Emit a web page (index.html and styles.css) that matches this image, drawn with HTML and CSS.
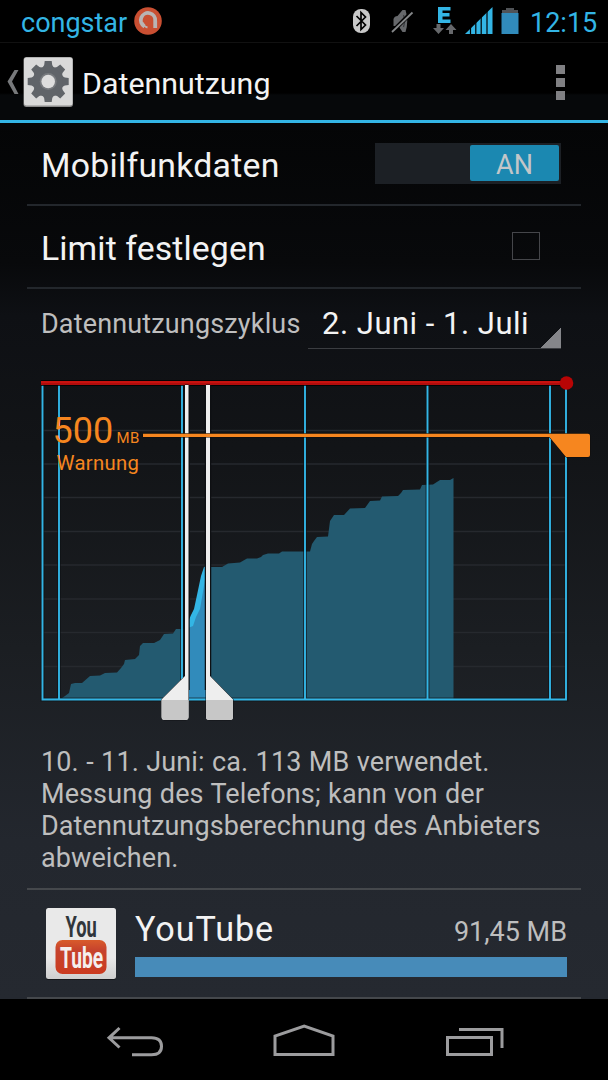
FILE: index.html
```html
<!DOCTYPE html>
<html lang="de">
<head>
  <meta charset="UTF-8" />
  <meta name="viewport" content="width=device-width, initial-scale=1.0"/>
  <title>Datennutzung</title>
  <link rel="stylesheet" href="styles.css">
</head>
<body>
  <div class="status-bar">
    <span class="carrier">congstar</span>
    <svg class="avast" width="28" height="28" viewBox="0 0 28 28">
      <circle cx="14" cy="14" r="13.8" fill="#c94f32"/>
      <path d="M10.500 19.500A7.200 7.200 0 1 1 21.200 14V21" fill="none" stroke="#b9b4b4" stroke-width="3.800"/>
      <path d="M13.500 20.500q-4-1-4.500-5" fill="none" stroke="#b9b4b4" stroke-width="2"/>
    </svg>
    <svg class="status-icons" width="170" height="42" viewBox="350 0 170 42">
      <rect x="353" y="9" width="17" height="24" rx="8" fill="#c9c9c9"/>
      <path d="M356.500 16l9 9-4.500 4.500v-17l4.500 4.500-9 9" fill="none" stroke="#000" stroke-width="1.700"/>
      <path d="M393.500 19q1-3 4-3l5-6h3q3.500 11 0 22h-3l-4-6h-5z" fill="#66686b"/>
      <path d="M403.500 15q2 6 0 12" fill="none" stroke="#3a3c3f" stroke-width="1.200"/>
      <path d="M391 33l21-21" stroke="#000" stroke-width="4"/>
      <path d="M392 32l20.500-19.500" stroke="#858789" stroke-width="1.800"/>
      <path d="M438 7h12.500v3.500h-8v2.500h7v3.500h-7v3h8V23H438z" fill="#33b5e5"/>
      <path d="M436.500 24h4v4h3.500l-5.500 6-5.500-6h3.500zM449 34h4v-4h3.500l-5.500-6-5.500 6h3.500z" fill="#66686b"/>
      <path d="M465 34L492.500 7v27z" fill="#33b5e5"/>
      <path d="M470.500 10v24M475.800 10v24M481.200 10v24M487 8v26" stroke="#000" stroke-width="1.200"/>
      <path d="M506 8h8v2h4v3h-16v-3h4z" fill="#505357"/>
      <path d="M501.500 13h17v21h-17z" fill="#318bbb"/>
    </svg>
    <span class="clock">12:15</span>
  </div>

  <header class="action-bar">
    <svg class="home-icon" width="73" height="60" viewBox="0 53 73 60">
      <path d="M14.500 71h4L12 82.500 18.500 95h-4L7.500 82.500z" fill="#77797b"/>
      <rect x="23.500" y="58" width="49.500" height="50" rx="3" fill="#8b8b8b"/>
      <rect x="24" y="58.500" width="48.500" height="48" rx="2.500" fill="#d9d9d9"/>
      <g transform="translate(48.200 82.500)">
        <g id="teeth" fill="#606469">
          <circle r="15.500"/>
          <path id="tooth" d="M-5.500-14Q-3.500-16-3.500-20.500H3.500Q3.500-16 5.500-14z"/>
          <use href="#tooth" transform="rotate(45)"/>
          <use href="#tooth" transform="rotate(90)"/>
          <use href="#tooth" transform="rotate(135)"/>
          <use href="#tooth" transform="rotate(180)"/>
          <use href="#tooth" transform="rotate(225)"/>
          <use href="#tooth" transform="rotate(270)"/>
          <use href="#tooth" transform="rotate(315)"/>
        </g>
        <circle r="8.500" fill="#777a7e"/>
        <circle r="6.800" fill="#dedede"/>
      </g>
    </svg>
    <h1>Datennutzung</h1>
    <div class="overflow-menu"><i></i><i></i><i></i></div>
  </header>

  <main>
    <div class="row">
      <span class="row-title mobile">Mobilfunkdaten</span>
      <div class="switch"><span class="thumb">AN</span></div>
    </div>
    <div class="row">
      <span class="row-title limit">Limit festlegen</span>
      <span class="checkbox"></span>
    </div>
    <div class="cycle">
      <span class="cycle-label">Datennutzungszyklus</span>
      <div class="spinner"><span>2. Juni - 1. Juli</span></div>
    </div>

    <svg class="chart" width="608" height="370" viewBox="0 365 608 370">
      <!-- horizontal grid -->
      <path class="grid" d="M43 430.500H566M43 464H566M43 497.500H566M43 531.500H566M43 565H566M43 599H566M43 632.500H566M43 666.500H566"/>
      <!-- usage -->
      <path class="usage" d="M43 698.500L62 698 65 696 69 693 71 684 75 683 82 683 90 676 100 675.500 105 673 117 672.500 121 668 124 664 125 660 135 659 139 655 140 646 143 643 154 643 160 640 164 634 173 633.500 176 629 187 629V699H43z"/>
      <path class="usage" d="M208 567L222 567 228 563.500 240 562.500 247 558.500 257 558.500 261 557 263 555 268 553.500 279 553.500 282 551.500 310 551.500 312 544 314 541 317 537 328 536.500 330 521 334 515 344 515 350 508.500 365 508 370 501 380 500.500 382 496.500 398 496 401 493 403 490 420 489.500 422 485 433 484.500 440 480 450 480 453.500 478V699H208z"/>
      <path d="M188 622L191 615 194 609 197 595 201 576 204 567 207 566V699H188z" fill="#33b5e5"/>
      <path d="M188 628L193 626 196 617 200 609 205 580 207 570V699H188z" fill="#318bbb"/>
      <!-- week lines and frame -->
      <path class="shadow" d="M42.500 384V699.500H566.500V384M59 385V699M182 385V699M305 385V699M427.500 385V699M550 385V699"/>
      <path class="frame" d="M42.500 384V699.500H566V384M59 385V699M182 385V699M305 385V699M427.500 385V699M550 385V699"/>
      <!-- limit -->
      <path d="M41 383H566" stroke="#000" stroke-width="5.500"/>
      <path d="M41 383H566" stroke="#b00c0c" stroke-width="4"/>
      <path d="M41 382H566" stroke="#cf1410" stroke-width="1.500"/>
      <circle cx="566.500" cy="383" r="6.800" fill="#b80505"/>
      <!-- sweep handles -->
      <path d="M186.500 385V690M208 385V690" stroke="#0c0e10" stroke-width="6.500"/>
      <path d="M185 385h3.500V717q0 3-3 3h-21q-3 0-3-3V699.500L185 676z" fill="#eee" stroke="#111316" stroke-width="1" paint-order="stroke"/>
      <path d="M161.800 700h26.700v17q0 3-3 3h-20.700q-3 0-3-3z" fill="#c7c7c7"/>
      <path d="M206 385h4V676l23 23.500V717q0 3-3 3h-21q-3 0-3-3z" fill="#eee" stroke="#111316" stroke-width="1" paint-order="stroke"/>
      <path d="M206 700h27v17q0 3-3 3h-21q-3 0-3-3z" fill="#c7c7c7"/>
      <!-- warning -->
      <path d="M143 433.800H588q2 0 2 2V455q0 2-2 2H566L549.500 437H143z" fill="#f6861f" stroke="#100d0a" stroke-width="1" paint-order="stroke"/>
      <text class="warn-value" x="52.500" y="443">500</text>
      <text class="warn-unit" x="116.500" y="442.500">MB</text>
      <text class="warn-label" x="56.500" y="470">Warnung</text>
    </svg>

    <p class="summary">10. - 11. Juni: ca. 113 MB verwendet.<br>Messung des Telefons; kann von der<br>Datennutzungsberechnung des Anbieters<br>abweichen.</p>

    <div class="app">
      <svg class="app-icon" width="70" height="72" viewBox="0 0 70 72">
        <defs>
          <linearGradient id="tile" x2="0" y2="1">
            <stop offset=".7" stop-color="#e9e9e9"/><stop offset="1" stop-color="#cfcfcf"/>
          </linearGradient>
          <linearGradient id="tube" x2="0" y2="1">
            <stop offset="0" stop-color="#d95b2b"/><stop offset=".3" stop-color="#c6432d"/><stop offset="1" stop-color="#cb3b20"/>
          </linearGradient>
        </defs>
        <rect x="0" y="1" width="70" height="71" rx="2" fill="#15181c"/>
        <rect width="70" height="71" rx="2.500" fill="url(#tile)"/>
        <rect x="9.500" y="32" width="51" height="34" rx="7" fill="url(#tube)"/>
        <text class="logo" transform="translate(19.500 29) scale(.61 1)" fill="#30363b">You</text>
        <text class="logo" transform="translate(14 60) scale(.64 1)" fill="#f4eeee">Tube</text>
      </svg>
      <div class="app-info">
        <div class="app-line">
          <span class="app-name">YouTube</span>
          <span class="app-size">91,45 MB</span>
        </div>
        <div class="app-bar"></div>
      </div>
    </div>
  </main>

  <nav class="nav-bar">
    <svg width="608" height="81" viewBox="0 999 608 81" fill="none" stroke="#9c9c9e" stroke-width="3">
      <path d="M119.500 1028L109 1037.800 119.500 1047.500M109 1037.800H151.500q10 0 10 8.500t-10 8.500H132"/>
      <path d="M275 1054.500V1036L304.200 1026 333 1036V1054.500z"/>
      <path d="M447.500 1037.500h44v17h-44zM459 1029.500h43V1048"/>
    </svg>
  </nav>
</body>
</html>
```
FILE: styles.css
```css
* {
  margin: 0;
  padding: 0;
  box-sizing: border-box;
}
body {
  width: 608px;
  height: 1080px;
  display: flex;
  flex-direction: column;
  overflow: hidden;
  background: #000;
  color: #f3f3f3;
  font-family: Roboto, sans-serif;
}
.status-bar {
  height: 43px;
  display: flex;
  align-items: center;
  padding: 0 11px 0 21px;
  border-bottom: 1px solid #111;
  color: #33b5e5;
  font-size: 27px;
}
.carrier {
  width: 113px;
  padding-top: 3px;
  white-space: nowrap;
}
.status-icons {
  margin-left: auto;
}
.clock {
  width: 67px;
  padding-top: 3px;
  margin-left: 10px;
  white-space: nowrap;
}
.action-bar {
  height: 80px;
  display: flex;
  align-items: center;
  border-bottom: 3px solid #33b5e5;
  background: linear-gradient(#000 50px, #06080a 52px);
}
.action-bar h1 {
  margin-left: 9px;
  padding-top: 4px;
  font-size: 30.4px;
  font-weight: 400;
}
.overflow-menu {
  display: flex;
  flex-direction: column;
  gap: 4px;
  margin: 2px 43px 0 auto;
}
.overflow-menu i {
  width: 9px;
  height: 9px;
  background: #808083;
}
main {
  height: 876px;
  display: flex;
  flex-direction: column;
  background: linear-gradient(#040506, #08090b 16%, #0e1014 22%, #121417 37%, #1b1e22 60%, #23272e 82%, #252930);
}
.row {
  height: 83px;
  flex: none;
  display: flex;
  align-items: center;
  margin: 0 27px;
  padding: 0 20px 0 14px;
  border-bottom: 2px solid #23272c;
}
.row-title {
  padding-top: 4px;
  font-size: 33.8px;
  letter-spacing: .25px;
}
.limit {
  padding-top: 3px;
  letter-spacing: .1px;
}
.switch {
  width: 186px;
  height: 41px;
  margin-left: auto;
  padding: 2px;
  display: flex;
  justify-content: flex-end;
  background: #1c2025;
}
.thumb {
  width: 89px;
  height: 36px;
  border-radius: 2px;
  background: #1b88b1;
  color: #c2c6c9;
  font-size: 27px;
  line-height: 40px;
  text-align: center;
}
.checkbox {
  width: 28px;
  height: 28px;
  margin: 0 21px 2px auto;
  border: 1.5px solid #45464a;
}
.cycle {
  height: 76px;
  flex: none;
  display: flex;
  align-items: flex-start;
  padding: 0 47px 0 41px;
}
.cycle-label {
  width: 267px;
  margin-top: 19px;
  color: #bebebe;
  font-size: 27px;
  line-height: 32px;
  letter-spacing: .15px;
  white-space: nowrap;
}
.spinner {
  flex: 1;
  height: 60px;
  padding: 16px 0 0 14px;
  border-bottom: 1.5px solid #3b3d41;
  background: linear-gradient(135deg, transparent 50%, #85868a 50%) right bottom / 20px 20px no-repeat;
  font-size: 31px;
  letter-spacing: .5px;
  white-space: nowrap;
}
.chart {
  flex: none;
  display: block;
}
.grid {
  stroke: #26292e;
  stroke-width: 1.5;
}
.usage {
  fill: #235a70;
}
.shadow {
  fill: none;
  stroke: #0d1114;
  stroke-opacity: .6;
  stroke-width: 4;
}
.frame {
  fill: none;
  stroke: #33b5e5;
  stroke-width: 1.9;
}
.warn-value,
.warn-unit,
.warn-label {
  fill: #f6861f;
}
.warn-value {
  font-size: 36px;
}
.warn-unit {
  font-size: 15px;
  letter-spacing: .4px;
}
.warn-label {
  font-size: 20.3px;
  letter-spacing: .3px;
}
.summary {
  height: 142px;
  flex: none;
  padding: 0 41px;
  margin-top: 11px;
  color: #bebebe;
  font-size: 27px;
  line-height: 32px;
  letter-spacing: .1px;
  word-spacing: .6px;
  white-space: nowrap;
}
.app {
  height: 111px;
  flex: none;
  display: flex;
  margin: 0 27px;
  padding: 18px 14px 0 19px;
  border-top: 2px solid #45484c;
  border-bottom: 2px solid #45484c;
}
.app-info {
  flex: 1;
  margin-left: 19px;
}
.app-line {
  height: 49px;
  padding-top: 1px;
  display: flex;
  justify-content: space-between;
  align-items: baseline;
}
.app-name {
  font-size: 34.2px;
  letter-spacing: .9px;
}
.app-size {
  color: #bebebe;
  font-size: 27px;
}
.app-bar {
  height: 20px;
  background: #478bb9;
}
.logo {
  font-family: Roboto, sans-serif;
  font-size: 30px;
  font-weight: 700;
}
.nav-bar {
  height: 81px;
  flex: none;
}
.nav-bar svg {
  display: block;
}
```
